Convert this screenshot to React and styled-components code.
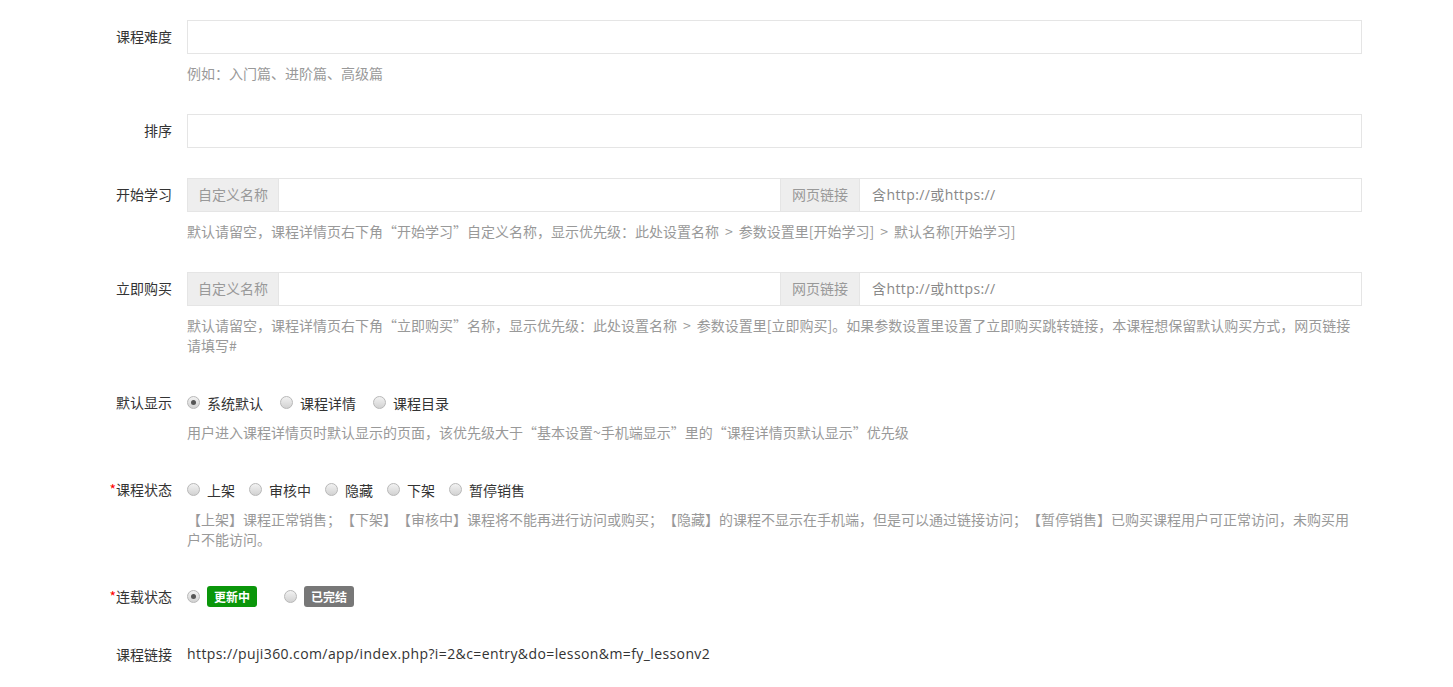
import React from "react";
import styled, { createGlobalStyle } from "styled-components";

const GlobalStyle = createGlobalStyle`
    html, body {
        margin: 0;
        padding: 0;
        background: #fff;
    }
    body {
        font-family: "Noto Sans CJK SC", "Open Sans", sans-serif;
        font-size: 14px;
        color: #333;
        text-spacing-trim: space-all;
    }
`;

const Form = styled.div`
    padding: 20px 0 0;
    width: 1362px;
`;

const Group = styled.div`
    display: grid;
    grid-template-columns: 172px 1175px;
    column-gap: 15px;
    margin-bottom: ${({ $mb }) => $mb ?? 30}px;
`;

const Label = styled.div`
    text-align: right;
    line-height: 32px;
    height: 34px;
    color: #333;
    white-space: nowrap;
`;

const Star = styled.span`
    color: #f00;
`;

const Control = styled.div`
    display: flex;
    flex-direction: column;
`;

const TextInput = styled.div`
    height: 34px;
    box-sizing: border-box;
    border: 1px solid #e5e5e5;
    background: #fff;
`;

const InputGroup = styled.div`
    display: flex;
    height: 34px;
`;

const Addon = styled.div`
    box-sizing: border-box;
    height: 34px;
    line-height: 30px;
    padding: 0 ${({ $pad }) => $pad}px;
    background: #eee;
    border: 1px solid #e5e5e5;
    color: #999;
    white-space: nowrap;
`;

const GroupInput = styled.div`
    flex: 1;
    box-sizing: border-box;
    height: 34px;
    line-height: 31px;
    padding: 0 12px;
    border: 1px solid #e5e5e5;
    border-left: none;
    border-right: ${({ $last }) => ($last ? "1px solid #e5e5e5" : "none")};
    color: #888;
    letter-spacing: 0.4px;
    font-family: "Open Sans", "Noto Sans CJK SC", sans-serif;
`;

const Help = styled.div`
    margin-top: ${({ $mt }) => $mt ?? 9}px;
    margin-bottom: 1px;
    line-height: 20px;
    color: #999;
    font-size: 14px;
`;

const Sep = styled.span`
    padding: 0 6px;
`;

const RadioRow = styled.div`
    display: flex;
    align-items: center;
    height: 34px;
    line-height: 20px;
    padding-bottom: 1px;
    box-sizing: border-box;
`;

const RadioItem = styled.label`
    display: flex;
    align-items: center;
    margin-right: ${({ $gap }) => $gap}px;
    color: #333;
`;

const Dot = styled.span`
    position: relative;
    width: 13px;
    height: 13px;
    box-sizing: border-box;
    border-radius: 50%;
    border: 1px solid #b8b8b8;
    background: linear-gradient(#f2f2f2, #d2d2d2);
    margin-right: ${({ $mr }) => $mr ?? 7}px;
    flex: none;
    &::after {
        content: "";
        display: ${({ $on }) => ($on ? "block" : "none")};
        position: absolute;
        left: 3px;
        top: 3px;
        width: 5px;
        height: 5px;
        border-radius: 50%;
        background: #555;
    }
`;

const Badge = styled.span`
    display: inline-block;
    height: 21px;
    line-height: 21px;
    padding: 0 6px;
    border-radius: 3px;
    font-size: 12px;
    font-weight: bold;
    color: #fff;
    background: ${({ $color }) => $color};
    width: 50px;
    box-sizing: border-box;
    text-align: center;
`;

const LinkText = styled.div`
    line-height: 32px;
    height: 34px;
    color: #333;
    letter-spacing: 0.4px;
    font-family: "Open Sans", "Noto Sans CJK SC", sans-serif;
`;

const Radios = ({ items, checked, gap }) => (
    <RadioRow>
        {items.map((t, i) => (
            <RadioItem key={t} $gap={gap}>
                <Dot $on={i === checked} />
                {t}
            </RadioItem>
        ))}
    </RadioRow>
);

const LinkGroup = () => (
    <InputGroup>
        <Addon $pad={10}>自定义名称</Addon>
        <GroupInput />
        <Addon $pad={11}>网页链接</Addon>
        <GroupInput $last>含http://或https://</GroupInput>
    </InputGroup>
);

const App = () => {
    return (
        <>
            <GlobalStyle />
            <Form>
                <Group>
                    <Label>课程难度</Label>
                    <Control>
                        <TextInput />
                        <Help>例如：入门篇、进阶篇、高级篇</Help>
                    </Control>
                </Group>
                <Group>
                    <Label>排序</Label>
                    <Control>
                        <TextInput />
                    </Control>
                </Group>
                <Group>
                    <Label>开始学习</Label>
                    <Control>
                        <LinkGroup />
                        <Help>
                            默认请留空，课程详情页右下角“开始学习”自定义名称，显示优先级：此处设置名称<Sep>&gt;</Sep>参数设置里[开始学习]<Sep>&gt;</Sep>默认名称[开始学习]
                        </Help>
                    </Control>
                </Group>
                <Group>
                    <Label>立即购买</Label>
                    <Control>
                        <LinkGroup />
                        <Help>
                            默认请留空，课程详情页右下角“立即购买”名称，显示优先级：此处设置名称<Sep>&gt;</Sep>参数设置里[立即购买]。如果参数设置里设置了立即购买跳转链接，本课程想保留默认购买方式，网页链接请填写#
                        </Help>
                    </Control>
                </Group>
                <Group>
                    <Label>默认显示</Label>
                    <Control>
                        <Radios items={["系统默认", "课程详情", "课程目录"]} checked={0} gap={17} />
                        <Help $mt={2}>
                            用户进入课程详情页时默认显示的页面，该优先级大于“基本设置~手机端显示”里的“课程详情页默认显示”优先级
                        </Help>
                    </Control>
                </Group>
                <Group>
                    <Label>
                        <Star>*</Star>课程状态
                    </Label>
                    <Control>
                        <Radios items={["上架", "审核中", "隐藏", "下架", "暂停销售"]} checked={-1} gap={14} />
                        <Help $mt={2}>
                            【上架】课程正常销售；【下架】【审核中】课程将不能再进行访问或购买；【隐藏】的课程不显示在手机端，但是可以通过链接访问；【暂停销售】已购买课程用户可正常访问，未购买用户不能访问。
                        </Help>
                    </Control>
                </Group>
                <Group $mb={24}>
                    <Label>
                        <Star>*</Star>连载状态
                    </Label>
                    <Control>
                        <RadioRow>
                            <RadioItem $gap={27}>
                                <Dot $on />
                                <Badge $color="#0a960a">更新中</Badge>
                            </RadioItem>
                            <RadioItem $gap={0}>
                                <Dot />
                                <Badge $color="#777">已完结</Badge>
                            </RadioItem>
                        </RadioRow>
                    </Control>
                </Group>
                <Group>
                    <Label>课程链接</Label>
                    <Control>
                        <LinkText>https://puji360.com/app/index.php?i=2&amp;c=entry&amp;do=lesson&amp;m=fy_lessonv2</LinkText>
                    </Control>
                </Group>
            </Form>
        </>
    );
};

export default App;
